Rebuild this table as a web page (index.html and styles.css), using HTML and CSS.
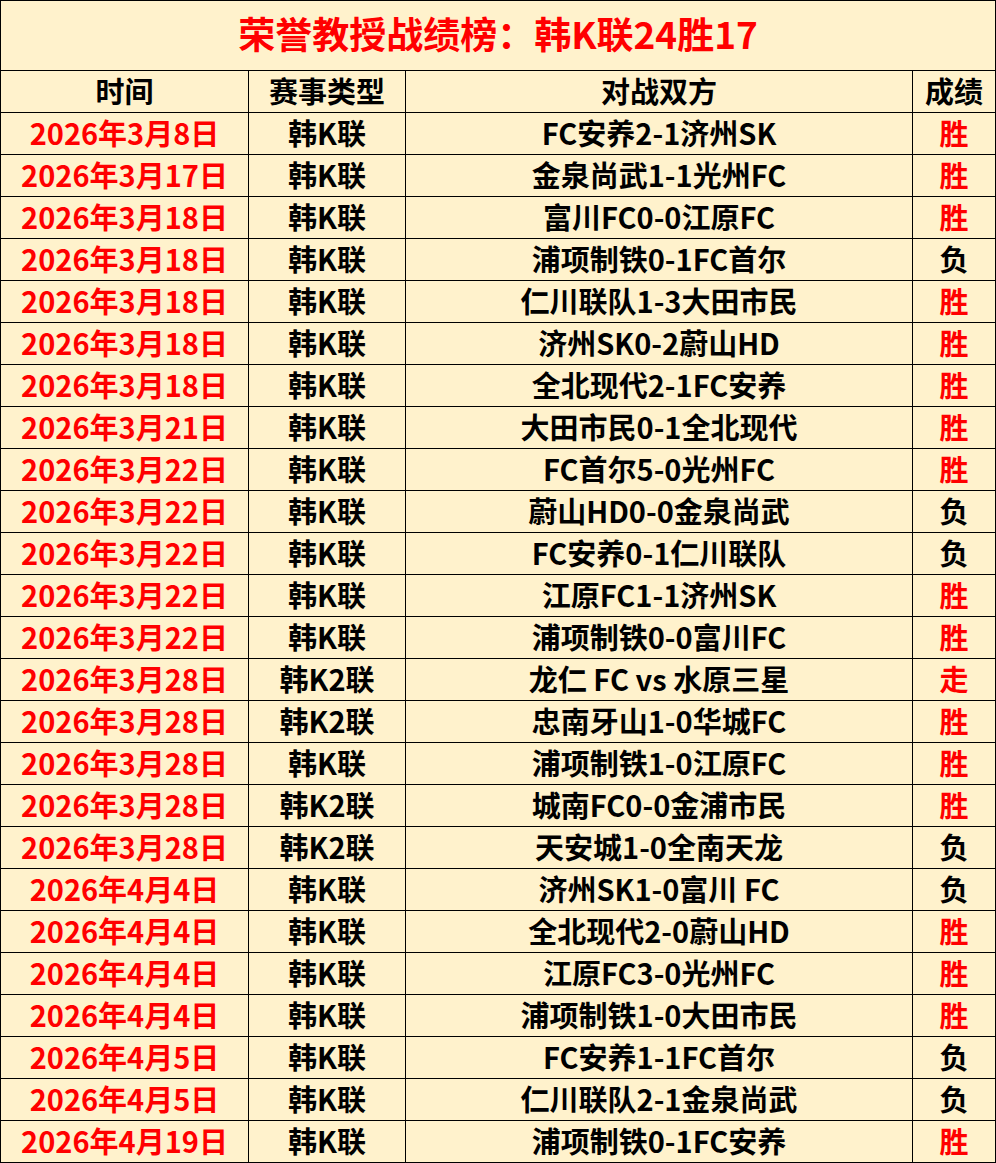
FILE: index.html
```html
<!DOCTYPE html>
<html lang="zh-CN">
<head>
<meta charset="utf-8">
<title>荣誉教授战绩榜</title>
<link rel="stylesheet" href="styles.css">
</head>
<body>
<div class="board">
  <div class="cell title">荣誉教授战绩榜：韩K联24胜17</div>
  <div class="cell head">时间</div>
  <div class="cell head">赛事类型</div>
  <div class="cell head">对战双方</div>
  <div class="cell head">成绩</div>

  <div class="cell date">2026年3月8日</div><div class="cell">韩K联</div><div class="cell">FC安养2-1济州SK</div><div class="cell win">胜</div>
  <div class="cell date">2026年3月17日</div><div class="cell">韩K联</div><div class="cell">金泉尚武1-1光州FC</div><div class="cell win">胜</div>
  <div class="cell date">2026年3月18日</div><div class="cell">韩K联</div><div class="cell">富川FC0-0江原FC</div><div class="cell win">胜</div>
  <div class="cell date">2026年3月18日</div><div class="cell">韩K联</div><div class="cell">浦项制铁0-1FC首尔</div><div class="cell">负</div>
  <div class="cell date">2026年3月18日</div><div class="cell">韩K联</div><div class="cell">仁川联队1-3大田市民</div><div class="cell win">胜</div>
  <div class="cell date">2026年3月18日</div><div class="cell">韩K联</div><div class="cell">济州SK0-2蔚山HD</div><div class="cell win">胜</div>
  <div class="cell date">2026年3月18日</div><div class="cell">韩K联</div><div class="cell">全北现代2-1FC安养</div><div class="cell win">胜</div>
  <div class="cell date">2026年3月21日</div><div class="cell">韩K联</div><div class="cell">大田市民0-1全北现代</div><div class="cell win">胜</div>
  <div class="cell date">2026年3月22日</div><div class="cell">韩K联</div><div class="cell">FC首尔5-0光州FC</div><div class="cell win">胜</div>
  <div class="cell date">2026年3月22日</div><div class="cell">韩K联</div><div class="cell">蔚山HD0-0金泉尚武</div><div class="cell">负</div>
  <div class="cell date">2026年3月22日</div><div class="cell">韩K联</div><div class="cell">FC安养0-1仁川联队</div><div class="cell">负</div>
  <div class="cell date">2026年3月22日</div><div class="cell">韩K联</div><div class="cell">江原FC1-1济州SK</div><div class="cell win">胜</div>
  <div class="cell date">2026年3月22日</div><div class="cell">韩K联</div><div class="cell">浦项制铁0-0富川FC</div><div class="cell win">胜</div>
  <div class="cell date">2026年3月28日</div><div class="cell">韩K2联</div><div class="cell">龙仁 FC vs 水原三星</div><div class="cell win">走</div>
  <div class="cell date">2026年3月28日</div><div class="cell">韩K2联</div><div class="cell">忠南牙山1-0华城FC</div><div class="cell win">胜</div>
  <div class="cell date">2026年3月28日</div><div class="cell">韩K联</div><div class="cell">浦项制铁1-0江原FC</div><div class="cell win">胜</div>
  <div class="cell date">2026年3月28日</div><div class="cell">韩K2联</div><div class="cell">城南FC0-0金浦市民</div><div class="cell win">胜</div>
  <div class="cell date">2026年3月28日</div><div class="cell">韩K2联</div><div class="cell">天安城1-0全南天龙</div><div class="cell">负</div>
  <div class="cell date">2026年4月4日</div><div class="cell">韩K联</div><div class="cell">济州SK1-0富川 FC</div><div class="cell">负</div>
  <div class="cell date">2026年4月4日</div><div class="cell">韩K联</div><div class="cell">全北现代2-0蔚山HD</div><div class="cell win">胜</div>
  <div class="cell date">2026年4月4日</div><div class="cell">韩K联</div><div class="cell">江原FC3-0光州FC</div><div class="cell win">胜</div>
  <div class="cell date">2026年4月4日</div><div class="cell">韩K联</div><div class="cell">浦项制铁1-0大田市民</div><div class="cell win">胜</div>
  <div class="cell date">2026年4月5日</div><div class="cell">韩K联</div><div class="cell">FC安养1-1FC首尔</div><div class="cell">负</div>
  <div class="cell date">2026年4月5日</div><div class="cell">韩K联</div><div class="cell">仁川联队2-1金泉尚武</div><div class="cell">负</div>
  <div class="cell date">2026年4月19日</div><div class="cell">韩K联</div><div class="cell">浦项制铁0-1FC安养</div><div class="cell win">胜</div>
</div>
</body>
</html>
```

FILE: styles.css
```css
html, body {
  margin: 0;
  padding: 0;
  background: #fff2cc;
}
.board {
  width: 996px;
  box-sizing: border-box;
  display: grid;
  grid-template-columns: 247px 156px 506px 82px;
  grid-template-rows: 69px repeat(26, 41px);
  gap: 1px;
  padding: 1px;
  background: #000;
  font-family: "Noto Sans CJK SC", "Noto Sans", sans-serif;
  font-weight: bold;
  font-size: 29px;
  color: #000;
}
.cell {
  background: #fff2cc;
  display: flex;
  align-items: center;
  justify-content: center;
  white-space: nowrap;
  line-height: 1;
  padding-bottom: 3px;
}
.title {
  grid-column: 1 / 5;
  color: #ff0000;
  font-size: 37px;
  padding-bottom: 4px;
}
.date, .win {
  color: #ff0000;
}
```
